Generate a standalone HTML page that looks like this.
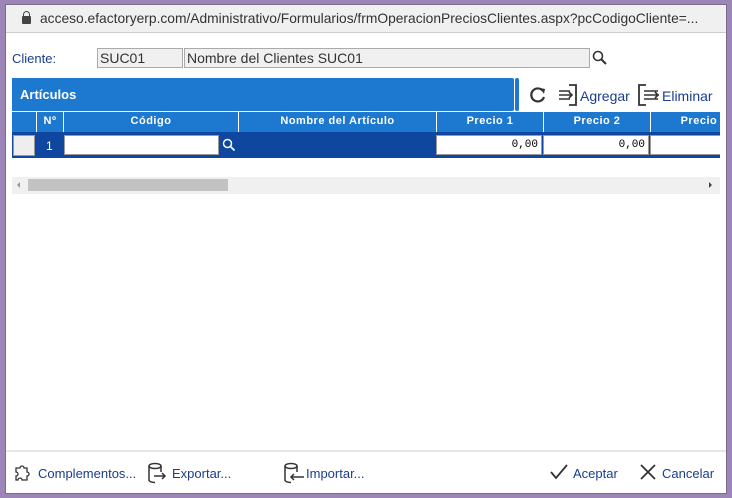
<!DOCTYPE html>
<html><head><meta charset="utf-8"><style>
*{box-sizing:border-box;margin:0;padding:0}
body{width:732px;height:498px;background:#9c86b8;font-family:"Liberation Sans",sans-serif;position:relative;overflow:hidden}
.win{position:absolute;left:5px;top:4px;width:722px;height:490px;background:#fff;border:1px solid #7a6a90}
.tb{position:absolute;left:0;top:0;width:720px;height:28px;background:#f0f0f0;border-bottom:1px solid #ccc;font-size:13.8px;color:#333;line-height:28px;padding-left:34px;white-space:nowrap;overflow:hidden}
.lock{position:absolute;left:16px;top:11px;width:9px;height:8px;background:#444;border-radius:1px}
.lock:before{content:"";position:absolute;left:1px;top:-5px;width:5px;height:6px;border:1.5px solid #444;border-bottom:none;border-radius:4px 4px 0 0}
.a{position:absolute}
.lbl{font-size:13px;color:#1a3d8f}
.inp{background:#f0f0f0;border:1px solid #aaa;font-size:14px;color:#333;padding-left:2px;line-height:18px;height:20px}
.bar{background:#1d78d0;color:#fff;font-weight:bold;font-size:13px}
.hd{background:#1d78d0;color:#fff;font-weight:bold;font-size:11px;text-align:center;line-height:19px;height:20px;border-left:1px solid #fff;letter-spacing:.5px}
.cell{background:#fff;border:1px solid #999;height:20px;font-family:"Liberation Mono",monospace;font-size:11px;text-align:right;padding-right:3px;line-height:18px}
.bl{font-size:13px;color:#1a3d8f}
</style></head><body>
<div class="win">
<div class="tb"><div class="lock"></div>acceso.efactoryerp.com/Administrativo/Formularios/frmOperacionPreciosClientes.aspx?pcCodigoCliente=...</div>
<div class="a lbl" style="left:6px;top:46px">Cliente:</div>
<div class="a inp" style="left:91px;top:43px;width:86px">SUC01</div>
<div class="a inp" style="left:178px;top:43px;width:406px">Nombre del Clientes SUC01</div>
<svg class="a" style="left:586px;top:45px" width="16" height="16"><circle cx="6" cy="6" r="4.5" fill="none" stroke="#333" stroke-width="1.6"/><path d="M9 9l5 5" stroke="#333" stroke-width="2"/></svg>
<div class="a bar" style="left:6px;top:73px;width:502px;height:33px;line-height:33px;padding-left:8px;border-radius:0 2px 2px 0">Artículos</div>
<div class="a" style="left:509px;top:73px;width:4px;height:33px;background:#1d78d0;border-radius:2px"></div>
<svg class="a" style="left:522px;top:80px" width="20" height="20"><path d="M15 6A6.5 6.5 0 1 0 16 12" fill="none" stroke="#333" stroke-width="2.2"/><path d="M12 3l5 1-1 5z" fill="#333"/></svg>
<svg class="a" style="left:551px;top:78px" width="22" height="24"><path d="M12 2h7v20h-7" fill="none" stroke="#333" stroke-width="1.8"/><path d="M2 8h11M2 12h13M2 16h11M12 9l3 3-3 3" fill="none" stroke="#333" stroke-width="1.6"/></svg>
<div class="a bl" style="left:574px;top:83px;font-size:14px">Agregar</div>
<svg class="a" style="left:630px;top:78px" width="26" height="24"><path d="M10 2H3v20h7" fill="none" stroke="#333" stroke-width="1.8"/><path d="M8 8h14M8 12h15M8 16h14M19 9l3 3-3 3" fill="none" stroke="#333" stroke-width="1.6"/></svg>
<div class="a bl" style="left:656px;top:83px;font-size:14px">Eliminar</div>
<div class="a" style="left:6px;top:107px;width:708px;height:46px;overflow:hidden">
<div class="a" style="left:0;top:0;width:708px;height:20px;background:#1d78d0"></div>
<div class="a hd" style="left:24px;top:0;width:27px">Nº</div>
<div class="a hd" style="left:51px;top:0;width:175px">Código</div>
<div class="a hd" style="left:226px;top:0;width:198px">Nombre del Artículo</div>
<div class="a hd" style="left:424px;top:0;width:107px">Precio 1</div>
<div class="a hd" style="left:531px;top:0;width:107px">Precio 2</div>
<div class="a hd" style="left:638px;top:0;width:107px">Precio 3</div>
<div class="a" style="left:0;top:20px;width:708px;height:26px;background:#0e46a0"></div>
<div class="a" style="left:1px;top:23px;width:22px;height:21px;background:#eee;border:1px solid #999"></div>
<div class="a" style="left:34px;top:27px;color:#fff;font-size:12px">1</div>
<div class="a" style="left:52px;top:23px;width:155px;height:20px;background:#fff;border:1px solid #999"></div>
<svg class="a" style="left:210px;top:26px" width="14" height="14"><circle cx="5.5" cy="5.5" r="4" fill="none" stroke="#fff" stroke-width="1.5"/><path d="M8.5 8.5l4 4" stroke="#fff" stroke-width="1.8"/></svg>
<div class="a cell" style="left:424px;top:23px;width:106px">0,00</div>
<div class="a cell" style="left:531px;top:23px;width:106px">0,00</div>
<div class="a cell" style="left:638px;top:23px;width:106px"></div>
</div>
<div class="a" style="left:6px;top:172px;width:708px;height:17px;background:#f0f0f0"></div>
<div class="a" style="left:22px;top:174px;width:200px;height:12px;background:#c2c2c2"></div>
<div class="a" style="left:11px;top:177px;border:3px solid transparent;border-right:3px solid #999;border-left:none"></div>
<div class="a" style="left:703px;top:177px;border:3px solid transparent;border-left:3px solid #444;border-right:none"></div>
<div class="a" style="left:0;top:445px;width:720px;height:2px;background:#e6e6e6"></div>
<svg class="a" style="left:7px;top:457px" width="18" height="20"><path d="M3 6h4a2 2 0 1 1 4 0h3v4a2 2 0 1 1 0 4v4H9a2 2 0 1 0-4 0H3v-4a2 2 0 1 0 0-4z" fill="none" stroke="#333" stroke-width="1.3"/></svg>
<div class="a bl" style="left:32px;top:461px">Complementos...</div>
<svg class="a" style="left:141px;top:457px" width="20" height="22"><ellipse cx="8" cy="4" rx="6" ry="2.5" fill="none" stroke="#333" stroke-width="1.5"/><path d="M2 4v14c0 1.5 3 2.5 6 2.5M14 4v6" fill="none" stroke="#333" stroke-width="1.5"/><path d="M7 14h11M15 11l3 3-3 3" fill="none" stroke="#333" stroke-width="1.5"/></svg>
<div class="a bl" style="left:166px;top:461px">Exportar...</div>
<svg class="a" style="left:277px;top:457px" width="22" height="22"><ellipse cx="8" cy="4" rx="6" ry="2.5" fill="none" stroke="#333" stroke-width="1.5"/><path d="M2 4v14c0 1.5 3 2.5 6 2.5M14 4v6" fill="none" stroke="#333" stroke-width="1.5"/><path d="M8 15h13M11 12l-3 3 3 3" fill="none" stroke="#333" stroke-width="1.5"/></svg>
<div class="a bl" style="left:300px;top:461px">Importar...</div>
<svg class="a" style="left:543px;top:459px" width="20" height="16"><path d="M2 8l5 6L18 1" fill="none" stroke="#333" stroke-width="1.8"/></svg>
<div class="a bl" style="left:567px;top:461px">Aceptar</div>
<svg class="a" style="left:634px;top:459px" width="16" height="16"><path d="M1 1l14 14M15 1L1 15" stroke="#333" stroke-width="1.8"/></svg>
<div class="a bl" style="left:656px;top:461px">Cancelar</div>
</div>
</body></html>
